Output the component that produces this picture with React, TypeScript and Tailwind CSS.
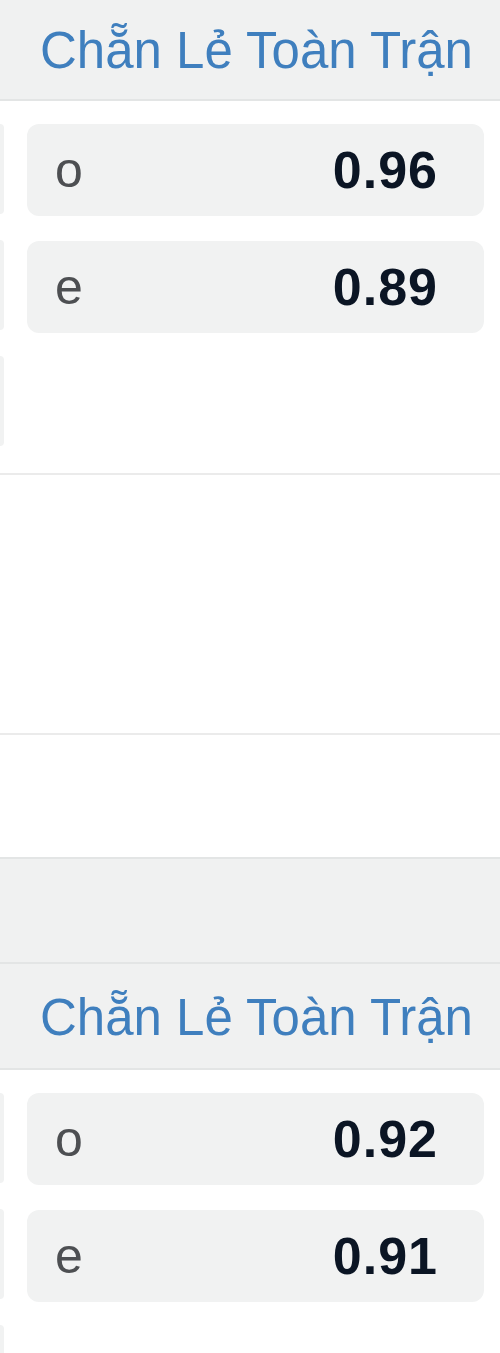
const font = { fontFamily: '"Liberation Sans", Arial, sans-serif' };

type Odd = { label: string; value: string };

function LeftStrips({ count }: { count: number }) {
  return (
    <div className="flex flex-col gap-[26px] w-[4px] shrink-0">
      {Array.from({ length: count }).map((_, i) => (
        <div key={i} className="h-[90px] w-[4px] rounded-r-[4px] bg-[#f1f2f2]" />
      ))}
    </div>
  );
}

function OddCard({ odd }: { odd: Odd }) {
  return (
    <div className="h-[92px] rounded-[12px] bg-[#f1f2f2] flex items-center justify-between pl-[28px] pr-[46px]">
      <span className="text-[50px] leading-none text-[#4d4f52]">{odd.label}</span>
      <span className="text-[52px] leading-none font-bold text-[#0b1524] tracking-[1px]">{odd.value}</span>
    </div>
  );
}

function Header({ height }: { height: number }) {
  return (
    <div
      className="bg-[#f0f1f1] border-b-2 border-[#e3e5e5] flex items-center pl-[40px] pt-[2px]"
      style={{ height }}
    >
      <span className="text-[51px] leading-none text-[#3f7fbe]">Chẵn Lẻ Toàn Trận</span>
    </div>
  );
}

function Market({ odds, headerHeight }: { odds: Odd[]; headerHeight: number }) {
  return (
    <div>
      <Header height={headerHeight} />
      <div className="flex gap-[23px] pt-[23px] pr-[16px]">
        <LeftStrips count={3} />
        <div className="flex-1 flex flex-col gap-[25px]">
          {odds.map((o) => (
            <OddCard key={o.label} odd={o} />
          ))}
        </div>
      </div>
    </div>
  );
}

export default function App() {
  return (
    <div className="w-[500px] h-[1353px] overflow-hidden bg-white" style={font}>
      <Market
        headerHeight={101}
        odds={[
          { label: "o", value: "0.96" },
          { label: "e", value: "0.89" },
        ]}
      />
      <div className="h-[29px] border-b-2 border-[#ebebeb]" />
      <div className="h-[260px] border-b-2 border-[#ebebeb]" />
      <div className="h-[124px] border-b-2 border-[#e3e5e5]" />
      <div className="h-[105px] bg-[#f0f1f1] border-b-2 border-[#e3e5e5]" />
      <Market
        headerHeight={106}
        odds={[
          { label: "o", value: "0.92" },
          { label: "e", value: "0.91" },
        ]}
      />
    </div>
  );
}
